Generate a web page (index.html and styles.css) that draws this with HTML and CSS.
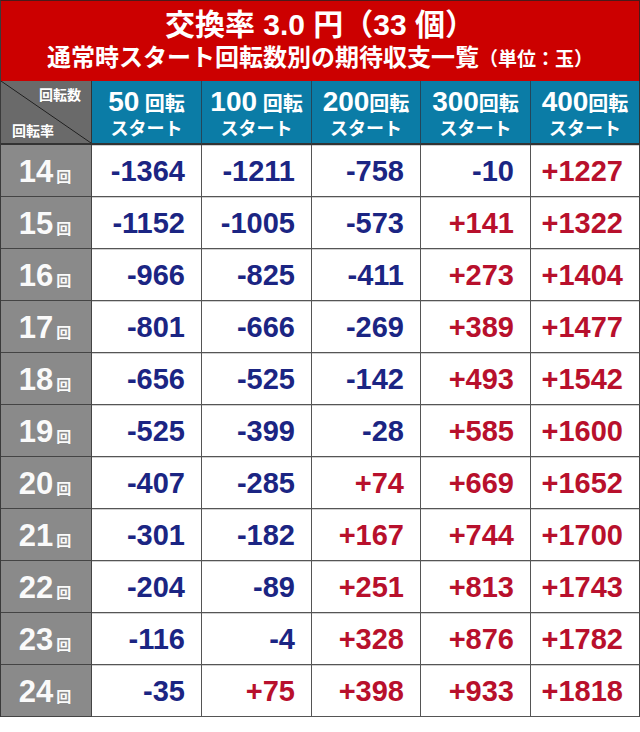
FILE: index.html
```html
<!DOCTYPE html>
<html lang="ja">
<head>
<meta charset="utf-8">
<title>交換率 3.0 円（33 個）</title>
<link rel="stylesheet" href="styles.css">
</head>
<body>
<div class="sheet">
  <div class="title">
    <div class="t1">交換率 3.0 円（33 個）</div>
    <div class="t2">通常時スタート回転数別の期待収支一覧<span class="unit">（単位：玉）</span></div>
  </div>
  <div class="grid">
    <div class="corner"><span class="c-top">回転数</span><span class="c-bot">回転率</span></div>
    <div class="head"><span class="hl1"><span class="hn">50</span> 回転</span><span class="hl2">スタート</span></div>
    <div class="head"><span class="hl1"><span class="hn">100</span> 回転</span><span class="hl2">スタート</span></div>
    <div class="head"><span class="hl1"><span class="hn">200</span>回転</span><span class="hl2">スタート</span></div>
    <div class="head"><span class="hl1"><span class="hn">300</span>回転</span><span class="hl2">スタート</span></div>
    <div class="head last"><span class="hl1"><span class="hn">400</span>回転</span><span class="hl2">スタート</span></div>

    <div class="lab">14<span class="kai">回</span></div>
    <div class="num neg">-1364</div><div class="num neg">-1211</div><div class="num neg">-758</div><div class="num neg">-10</div><div class="num pos last">+1227</div>

    <div class="lab">15<span class="kai">回</span></div>
    <div class="num neg">-1152</div><div class="num neg">-1005</div><div class="num neg">-573</div><div class="num pos">+141</div><div class="num pos last">+1322</div>

    <div class="lab">16<span class="kai">回</span></div>
    <div class="num neg">-966</div><div class="num neg">-825</div><div class="num neg">-411</div><div class="num pos">+273</div><div class="num pos last">+1404</div>

    <div class="lab">17<span class="kai">回</span></div>
    <div class="num neg">-801</div><div class="num neg">-666</div><div class="num neg">-269</div><div class="num pos">+389</div><div class="num pos last">+1477</div>

    <div class="lab">18<span class="kai">回</span></div>
    <div class="num neg">-656</div><div class="num neg">-525</div><div class="num neg">-142</div><div class="num pos">+493</div><div class="num pos last">+1542</div>

    <div class="lab">19<span class="kai">回</span></div>
    <div class="num neg">-525</div><div class="num neg">-399</div><div class="num neg">-28</div><div class="num pos">+585</div><div class="num pos last">+1600</div>

    <div class="lab">20<span class="kai">回</span></div>
    <div class="num neg">-407</div><div class="num neg">-285</div><div class="num pos">+74</div><div class="num pos">+669</div><div class="num pos last">+1652</div>

    <div class="lab">21<span class="kai">回</span></div>
    <div class="num neg">-301</div><div class="num neg">-182</div><div class="num pos">+167</div><div class="num pos">+744</div><div class="num pos last">+1700</div>

    <div class="lab">22<span class="kai">回</span></div>
    <div class="num neg">-204</div><div class="num neg">-89</div><div class="num pos">+251</div><div class="num pos">+813</div><div class="num pos last">+1743</div>

    <div class="lab">23<span class="kai">回</span></div>
    <div class="num neg">-116</div><div class="num neg">-4</div><div class="num pos">+328</div><div class="num pos">+876</div><div class="num pos last">+1782</div>

    <div class="lab">24<span class="kai">回</span></div>
    <div class="num neg">-35</div><div class="num pos">+75</div><div class="num pos">+398</div><div class="num pos">+933</div><div class="num pos last">+1818</div>
  </div>
</div>
</body>
</html>
```
FILE: styles.css
```css
html, body {
  margin: 0;
  padding: 0;
  background: #ffffff;
}

body {
  font-family: "Liberation Sans", Arial, "Noto Sans CJK JP", sans-serif;
  font-weight: bold;
}

.sheet {
  width: 640px;
  box-sizing: border-box;
  border-top: 1px solid #4a1a1a;
  border-left: 1px solid #3a3a3a;
}

.title {
  height: 80px;
  background: #cc0000;
  color: #ffffff;
  display: flex;
  flex-direction: column;
  align-items: center;
  border-right: 1px solid #4a1a1a;
  font-family: "Liberation Sans", "Noto Sans CJK JP", sans-serif;
}

.t1 {
  font-size: 30px;
  line-height: 34px;
  margin-top: 7px;
}

.t2 {
  font-size: 24px;
  line-height: 28px;
  margin-top: 2px;
  white-space: nowrap;
}

.unit {
  font-size: 19px;
}

.grid {
  display: grid;
  grid-template-columns: 91px 110px 110px 109px 110px 109px;
  grid-template-rows: 64px repeat(11, 52px);
}

.corner {
  box-sizing: border-box;
  background: linear-gradient(to top right, #6a6a6a calc(50% - 0.8px), #1e1e1e 50%, #6a6a6a calc(50% + 0.8px));
  border-right: 1px solid #333;
  border-bottom: 2px solid #333;
  display: flex;
  flex-direction: column;
  justify-content: space-between;
  color: #ffffff;
  font-family: "Noto Sans CJK JP", sans-serif;
  font-size: 14px;
  line-height: 16px;
  padding: 5px 10px 5px 11px;
}

.c-top {
  align-self: flex-end;
}

.c-bot {
  align-self: flex-start;
}

.head {
  box-sizing: border-box;
  background: #0b7ca6;
  border-right: 1px solid #23465a;
  border-bottom: 2px solid #333;
  color: #ffffff;
  display: flex;
  flex-direction: column;
  align-items: center;
  font-family: "Liberation Sans", "Noto Sans CJK JP", sans-serif;
  padding-top: 8px;
}

.head.last {
  border-right: 1px solid #333;
}

.hl1 {
  font-size: 20px;
  line-height: 26px;
  white-space: nowrap;
}

.hn {
  font-size: 28px;
}

.hl2 {
  font-size: 18px;
  line-height: 24px;
}

.lab {
  box-sizing: border-box;
  background: #8a8a8a;
  color: #fafafa;
  border-right: 1px solid #444;
  border-bottom: 1px solid #444;
  display: flex;
  align-items: baseline;
  justify-content: center;
  font-size: 31px;
  line-height: 50px;
  padding-top: 2px;
  padding-right: 2px;
}

.kai {
  font-family: "Noto Sans CJK JP", sans-serif;
  font-size: 15px;
  margin-left: 3px;
}

.num {
  box-sizing: border-box;
  background: #ffffff;
  border-right: 1px solid #555;
  border-bottom: 1px solid #555;
  box-shadow: inset 0 1px 0 #d0d0d0;
  text-align: right;
  font-size: 29px;
  line-height: 51px;
  padding-top: 1px;
  padding-right: 16px;
}

.num.last {
  border-right: 1px solid #444;
}

.neg {
  color: #1b2583;
}

.pos {
  color: #b8102c;
}
```
